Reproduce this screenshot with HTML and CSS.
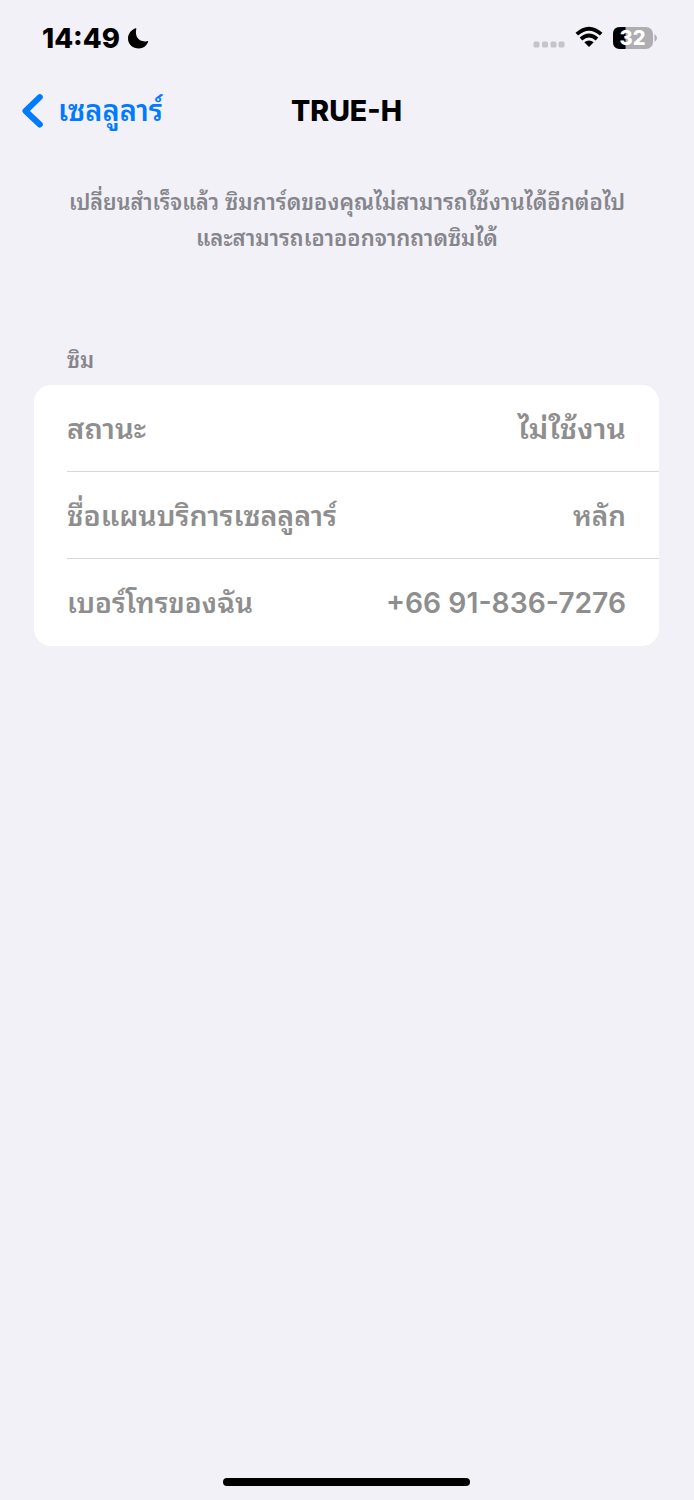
FILE: index.html
```
<!DOCTYPE html>
<html lang="th"><head><meta charset="utf-8"><title>TRUE-H</title><link rel="stylesheet" href="styles.css"></head>
<body>
<header class="status">
<div class="clock"><svg class="time" width="78" height="36"><text x="0" y="28.600" textLength="78" lengthAdjust="spacingAndGlyphs">14:49</text></svg>
<svg class="moon" width="22" height="22" viewBox="0 0 22 22"><path d="M7.500 .3Q8.500-.2 8.300 1C6.500 8.500 11 14.500 19 13.200Q20.700 12.700 20 14.300C18 18.500 15 20.500 11 20.500C4.800 20.500 0 16.500 0 10.500C0 6 3 2 7.500 .3Z"/></svg></div>
<div class="indicators">
<svg width="32" height="8" viewBox="0 0 32 8" fill="#c4c4c9"><rect x="0.500" y="1.500" width="6" height="6" rx="1.500"/><rect x="9" y="1.500" width="6" height="6" rx="1.500"/><rect x="17.500" y="1.500" width="6" height="6" rx="1.500"/><rect x="25.500" y="1.500" width="6" height="6" rx="1.500"/></svg>
<svg class="wifi" width="28" height="21" viewBox="0 0 28 21"><path d="M1.800 7.200Q14-3.800 26.200 7.200M6 12Q14 5 22 12" fill="none" stroke="#000" stroke-width="3.800"/><path d="M9.300 15.300Q14 11.500 18.700 15.300L14 20Z"/></svg>
<svg class="battery" width="46" height="23" viewBox="0 0 46 23"><rect x="1" width="40" height="22" rx="7" fill="#adadb2"/><path d="M13.500 0H8Q1 0 1 7V15Q1 22 8 22H13.500Z"/><path d="M42.500 7Q45 9 45 11Q45 13 42.500 15Z" fill="#adadb2"/><text x="7.500" y="18.300" textLength="26" lengthAdjust="spacingAndGlyphs">32</text></svg>
</div></header>
<nav class="nav"><a class="back"><svg width="22" height="34" viewBox="0 0 22 34"><path d="M17.800 3.200L3.500 17L17.800 30.500" fill="none" stroke="#007aff" stroke-width="6" stroke-linecap="round" stroke-linejoin="round"/></svg><svg class="thai" width="106" height="50"><text x="0" y="34.500" textLength="105" lengthAdjust="spacingAndGlyphs">เซลลูลาร์</text></svg></a><h1><svg width="112" height="36"><text x="0" y="28" textLength="111" lengthAdjust="spacingAndGlyphs">TRUE-H</text></svg></h1></nav>
<main>
<section class="notice">
<svg width="558" height="36"><text x="1" y="24" textLength="150" lengthAdjust="spacingAndGlyphs">เปลี่ยนสำเร็จแล้ว</text><text x="157" y="24" textLength="400" lengthAdjust="spacingAndGlyphs">ซิมการ์ดของคุณไม่สามารถใช้งานได้อีกต่อไป</text></svg>
<svg width="304" height="36"><text x="1" y="24" textLength="302" lengthAdjust="spacingAndGlyphs">และสามารถเอาออกจากถาดซิมได้</text></svg></section>
<h2><svg width="30" height="36"><text x="0" y="24" textLength="27" lengthAdjust="spacingAndGlyphs">ซิม</text></svg></h2>
<section class="card">
<div class="row"><svg width="80" height="60"><text x="0" y="40.500" textLength="79" lengthAdjust="spacingAndGlyphs">สถานะ</text></svg><svg width="108" height="60"><text x="0" y="40.500" textLength="108" lengthAdjust="spacingAndGlyphs">ไม่ใช้งาน</text></svg></div>
<div class="row"><svg width="270" height="60"><text x="0" y="41" textLength="270" lengthAdjust="spacingAndGlyphs">ชื่อแผนบริการเซลลูลาร์</text></svg><svg width="53" height="60"><text x="0" y="41" textLength="53" lengthAdjust="spacingAndGlyphs">หลัก</text></svg></div>
<div class="row"><svg width="186" height="60"><text x="0" y="41" textLength="186" lengthAdjust="spacingAndGlyphs">เบอร์โทรของฉัน</text></svg><svg width="240" height="60"><text x="0" y="41" textLength="240" lengthAdjust="spacingAndGlyphs">+66 91-836-7276</text></svg></div>
</section></main>
<div class="home"></div>
</body></html>
```
FILE: styles.css
```
*{box-sizing:border-box}
body{margin:0;height:1500px;background:#f2f1f8;font-family:Inter,"Noto Sans Thai Looped","Noto Looped Thai","Loma","Waree","Garuda","Noto Sans Thai","Noto Sans",sans-serif;display:flex;flex-direction:column}
svg{display:block;overflow:visible;flex:none}
.status{height:76px;padding:19px 36px 0 42px;display:flex;justify-content:space-between}
.clock{display:flex;gap:8px}
.time{font-size:27px;font-weight:800}
.moon{margin-top:9px}
.indicators{display:flex}
.indicators>svg:first-child{margin-top:21px}
.wifi{margin:8px 9px 0 10px}
.battery{margin-top:8px}
.battery text{font-size:20px;font-weight:800;fill:#fff}
.nav{height:70px;display:grid;grid-template-columns:1fr 112px 1fr;align-items:center}
.back{padding-left:22px;display:flex;align-items:center;gap:14px;color:#007aff}
.thai{font-size:29px;font-weight:600;fill:#007aff}
h1,h2{margin:0}
h1{font-size:28px;font-weight:800}
.notice{padding-top:40px;display:flex;flex-direction:column;align-items:center;font-size:22px;font-weight:600;fill:#85858b}
h2{margin:86px 0 0 67px;font-size:22px;font-weight:600;fill:#85858b}
.card{width:625px;margin:5px 0 0 34px;background:#fff;border-radius:17px;overflow:hidden}
.row{height:87px;margin-left:33px;padding-right:33px;display:flex;align-items:center;justify-content:space-between;border-bottom:1px solid #d8d8dc;font-size:28px;font-weight:600;fill:#8e8e8e}
.row:last-child{height:86.5px;border-bottom:0}
.home{width:247px;height:8px;border-radius:4px;background:#000;margin:auto auto 14px 223px}
```
